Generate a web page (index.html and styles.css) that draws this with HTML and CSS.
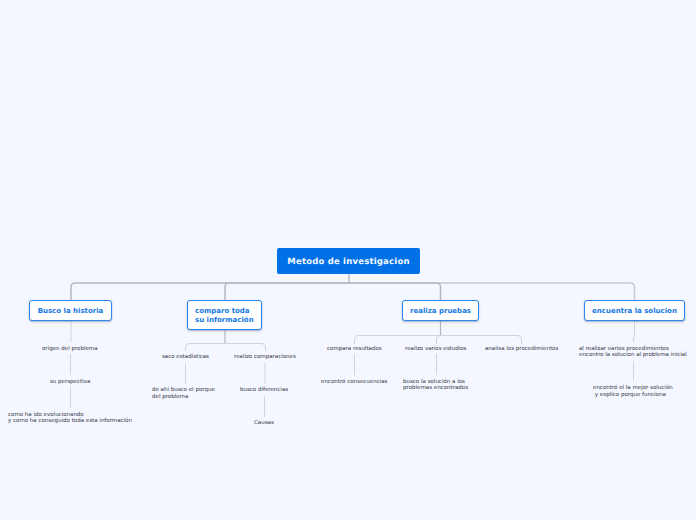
FILE: index.html
```html
<!DOCTYPE html>
<html lang="es">
<head>
<meta charset="utf-8">
<title>Metodo de investigacion</title>
<link rel="stylesheet" href="styles.css">
</head>
<body>
<main class="map">
  <svg class="links" width="696" height="520" viewBox="0 0 696 520" fill="none">
    <g class="main-links">
      <path class="w2 light" d="M349 283H630.5Q634.5 283 634.5 287V300"/>
      <path class="w2" d="M349 283H75Q71 283 71 287V300"/>
      <path class="w2" d="M349 283H229Q225 283 225 287V300"/>
      <path class="w2" d="M349 283H436.5Q440.5 283 440.5 287V300"/>
      <path d="M349 274V283"/>
    </g>
    <g class="sub-links">
      <path d="M225 343.500H190Q185.500 343.500 185.500 348V351"/>
      <path d="M225 343.500H261Q265.500 343.500 265.500 348V351"/>
      <path d="M440.500 335.500H359Q354.500 335.500 354.500 340V344"/>
      <path d="M440.500 335.500H441Q436.500 335.500 436.500 340V344"/>
      <path d="M440.500 335.500H517Q521.500 335.500 521.500 340V344"/>
      <path d="M71 321V342"/>
      <path d="M70.500 354V375"/>
      <path d="M70.500 387V408"/>
      <path d="M185.500 363V384"/>
      <path d="M265 363V384"/>
      <path d="M264.500 396V417"/>
      <path d="M354.500 354V375"/>
      <path d="M436.500 354V375"/>
      <path d="M634.500 321V335Q634.500 337 633.500 338V342"/>
      <path d="M633.500 361V381"/>
      <path class="strong" d="M225 329V343"/>
      <path class="strong" d="M440.500 321V335"/>
    </g>
  </svg>

  <div class="node root">Metodo de investigacion</div>
  <div class="node topic n-busco">Busco la historia</div>
  <div class="node topic n-comparo">comparo toda<br>su información</div>
  <div class="node topic n-realiza">realiza pruebas</div>
  <div class="node topic n-encuentra">encuentra la solucion</div>

  <div class="leaf l-origen">origen del problema</div>
  <div class="leaf l-perspectiva">su perspectiva</div>
  <div class="leaf l-como">como ha ido evolucionando<br>y como ha conseguido toda esta información</div>
  <div class="leaf l-saco">saco estadísticas</div>
  <div class="leaf l-realizo">realizo comparaciones</div>
  <div class="leaf leaf-tall l-ahi">de ahí busco el porque<br>del problema</div>
  <div class="leaf l-diferencias">busco diferencias</div>
  <div class="leaf l-causas">Causas</div>
  <div class="leaf l-compara">compara resultados</div>
  <div class="leaf l-encontro">encontró consecuencias</div>
  <div class="leaf l-varios">realizo varios estudios</div>
  <div class="leaf l-busco">busco la solución a los<br>problemas encontrados</div>
  <div class="leaf l-analisa">analisa los procedimientos</div>
  <div class="leaf l-alrealizar">al realizar varios procedimientos<br>encontro la solucion al problema inicial</div>
  <div class="leaf leaf-tall l-mejor">encontró el la mejor solución<br>&nbsp;y explico porque funciona</div>
</main>
</body>
</html>
```
FILE: styles.css
```css
* { box-sizing: border-box; }
html, body { margin: 0; padding: 0; }
body { background: #f4f7ff; font-family: "DejaVu Sans", sans-serif; overflow: hidden; text-rendering: geometricPrecision; }
.map { position: relative; width: 696px; height: 520px; background: #f4f7ff; }
.links { position: absolute; left: 0; top: 0; }
.main-links path { stroke: #aeafb4; stroke-width: 1.2; }
.main-links path.w2 { stroke-width: 1.5; stroke: #b8b9be; }
.main-links path.light { stroke: #c8c9cf; }
.sub-links path { stroke: #d2d3d9; stroke-width: 1; }
.sub-links path.strong { stroke: #b4b5ba; stroke-width: 1.2; }
.node { position: absolute; display: flex; align-items: center; font-weight: 700; white-space: nowrap; padding-top: 1px; }
.root {
  left: 277px; top: 248px; width: 143px; height: 26px;
  justify-content: center; background: #0070e6; border-radius: 2px;
  color: #f3f8ff; font-size: 8.500px; letter-spacing: .2px;
}
.topic {
  top: 300px; height: 21px; justify-content: center;
  background: #fff; border: 1.500px solid #2a86ec; border-radius: 3px;
  box-shadow: 0 1px 2px rgba(70, 90, 130, .45);
  color: #1478e4; font-size: 7px; line-height: 9px;
}
.n-busco { left: 29px; width: 83px; }
.n-comparo { left: 187px; width: 75px; height: 30px; justify-content: flex-start; padding-left: 7px; }
.n-realiza { left: 402px; width: 77px; }
.n-encuentra { left: 584px; width: 101px; }
.leaf { position: absolute; padding-top: 1px; color: #33353f; font-size: 5.500px; line-height: 6px; white-space: nowrap; }
.leaf-tall { line-height: 7px; }
.l-origen { left: 42px; top: 345px; }
.l-perspectiva { left: 50px; top: 378px; }
.l-como { left: 8px; top: 411px; }
.l-saco { left: 162px; top: 353px; }
.l-realizo { left: 234px; top: 353px; }
.l-ahi { left: 152px; top: 386px; }
.l-diferencias { left: 240px; top: 386px; }
.l-causas { left: 254px; top: 419px; }
.l-compara { left: 327px; top: 345px; }
.l-encontro { left: 321px; top: 378px; }
.l-varios { left: 405px; top: 345px; }
.l-busco { left: 403px; top: 378px; }
.l-analisa { left: 485px; top: 345px; }
.l-alrealizar { left: 579px; top: 345px; }
.l-mejor { left: 593px; top: 384px; }
```
